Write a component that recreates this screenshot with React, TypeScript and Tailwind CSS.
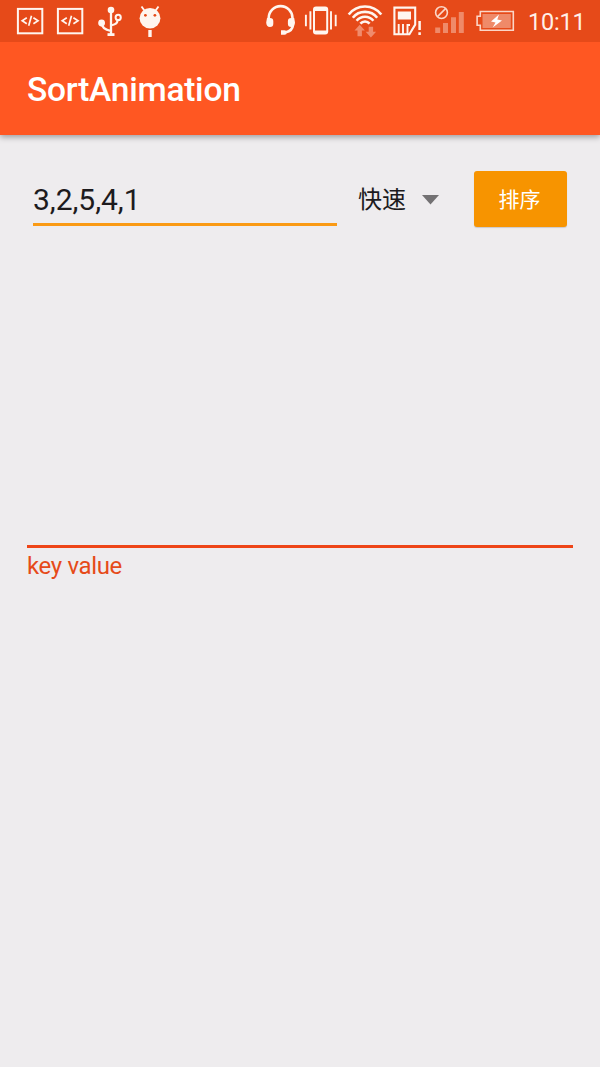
import { useState } from "react";
import type { ReactNode } from "react";

// Status icons share one 42px high coordinate strip; x is where each slice starts.
function StatusIcon({ x, className, children }: { x: number; className: string; children: ReactNode }) {
  const width = className.includes("w-[50px]") ? 50 : 40;
  return (
    <svg className={`h-[42px] shrink-0 ${className}`} viewBox={`${x} 0 ${width} 42`} fill="none" stroke="#fff5ef">
      {children}
    </svg>
  );
}

function CodeIcon({ x }: { x: number }) {
  return (
    <StatusIcon x={x} className="w-[40px]">
      <rect x={x + 7.9} y="8.9" width="24.4" height="24.4" strokeWidth="2" />
      <path d={`M${x + 16.8} 17.8l-4.600 3 4.600 3M${x + 23.4} 17.8l4.600 3-4.600 3M${x + 21.5} 15.8l-2.800 10`} strokeWidth="1.700" />
    </StatusIcon>
  );
}

function StatusBar() {
  return (
    <div className="flex h-[42px] shrink-0 items-start overflow-hidden bg-[#e64a19] pl-[10px]">
      <CodeIcon x={10} />
      <CodeIcon x={50} />
      <StatusIcon x={90} className="w-[40px]">
        <circle cx="111" cy="10" r="3.3" fill="#fff5ef" stroke="none" />
        <circle cx="101.6" cy="23" r="3.4" fill="#fff5ef" stroke="none" />
        <path d="M111 10v24M101.6 23c0 4 3 6.6 9.4 8M111 25.3c4-.5 6.3-2 6.6-4.8" strokeWidth="2.3" />
        <circle cx="118.2" cy="17.4" r="2.600" strokeWidth="2" />
        <path d="M107.500 34.600h7" strokeWidth="2.800" />
      </StatusIcon>
      <StatusIcon x={130} className="w-[40px]">
        <path d="M141.5 6.5l4 5.500M158.500 6.500l-4 5.500" strokeWidth="1.900" />
        <ellipse cx="150" cy="18.200" rx="10.400" ry="10.200" fill="#fff5ef" stroke="none" />
        <circle cx="145.400" cy="15.300" r="1.400" fill="#e64a19" stroke="none" />
        <circle cx="154.900" cy="15.300" r="1.400" fill="#e64a19" stroke="none" />
        <path d="M150 30v7" strokeWidth="3.400" />
      </StatusIcon>
      <div className="flex-1" />
      <StatusIcon x={260} className="w-[40px]">
        <path d="M268.700 22v-4a11.900 11.900 0 0 1 23.800 0v4M293 25c-.5 4-3 6.500-7 7.200" strokeWidth="2.600" />
        <path d="M267 18h3a3.300 3.300 0 0 1 3.300 3.300v2.400a3.300 3.300 0 0 1-3.300 3.300c-2.500 0-3.800-2-3.800-4.500zM294.200 18h-3a3.300 3.300 0 0 0-3.300 3.300v2.400a3.300 3.300 0 0 0 3.300 3.300c2.500 0 3.800-2 3.800-4.500z" fill="#fff5ef" stroke="none" />
        <path d="M281 30.200h3.500a2.300 2.300 0 0 1 0 4.600h-3.500z" fill="#fff5ef" stroke="none" />
      </StatusIcon>
      <StatusIcon x={300} className="w-[40px]">
        <rect x="313" y="6.400" width="15.200" height="28" rx="3" fill="#fff5ef" stroke="none" />
        <rect x="315" y="11" width="11.200" height="19.500" fill="#e64a19" stroke="none" />
        <path d="M310.400 11.300v18.200M331 11.300v18.200" strokeWidth="1.900" />
        <path d="M305.900 14.700v11.500M335.700 14.700v11.500" strokeWidth="1.900" />
      </StatusIcon>
      <StatusIcon x={340} className="w-[50px]">
        <path d="M348.700 14.500a20.500 20.500 0 0 1 32.600 0M352.800 17.800a15.500 15.500 0 0 1 24.400 0M356.600 20.800a10.700 10.700 0 0 1 16.800 0M360.400 23.700a6 6 0 0 1 9.200 0" strokeWidth="2.600" />
        <path d="M359.700 24.800l5.200 5.700h-3v5.700h-4.400v-5.700h-3zM370.900 37.500l5.200-5.700h-3v-5h-4.400v5h-3z" fill="#f08b6c" stroke="none" />
      </StatusIcon>
      <StatusIcon x={390} className="w-[40px]">
        <path d="M394.400 7.600h20.800v17l-5.800 9.600h-15z" strokeWidth="2.100" />
        <rect x="397.800" y="11.500" width="13.200" height="8" fill="#fff5ef" stroke="none" />
        <path d="M398.700 24v10M403 24v10M407.500 24v10M406.600 25h3.400" strokeWidth="1.900" />
        <path d="M419.600 21v9M419.600 32.300v2.700" strokeWidth="2.500" />
      </StatusIcon>
      <StatusIcon x={430} className="w-[40px]">
        <circle cx="441.500" cy="12.600" r="5.900" strokeWidth="1.600" stroke="#fbd6c7" />
        <path d="M437.500 16.600l8-8" strokeWidth="1.600" stroke="#fbd6c7" />
        <path d="M435.200 27.500h5v5.500h-5zM443 23h5v10h-5zM451 17.200h5v15.800h-5zM458.800 12h5v21h-5z" fill="#ef8a69" stroke="none" />
      </StatusIcon>
      <StatusIcon x={470} className="w-[50px]">
        <path d="M480.300 11.500h33v18.800h-33v-5h-3.200v-9h3.200z" strokeWidth="1.600" stroke="#fbd6c7" />
        <path d="M482.500 14h28.300v14h-28.300z" fill="#ef8a69" stroke="none" />
        <path d="M499 14.500l-8 7 4.500 1-2.800 5 9.300-7-4.700-1z" fill="#fff" stroke="none" />
      </StatusIcon>
      <span className="w-[80px] pl-[8px] text-[23.500px] leading-[44px] tracking-[-0.200px] text-[#fff0e8]">10:11</span>
    </div>
  );
}

export default function App() {
  const [values, setValues] = useState("3,2,5,4,1");

  return (
    <div className="flex h-[1067px] w-[600px] flex-col overflow-hidden bg-[#eeecee] font-['Roboto','Noto_Sans_CJK_SC',sans-serif]">
      <header className="relative flex shrink-0 flex-col shadow-[0_2px_6px_rgba(0,0,0,0.35)]">
        <StatusBar />
        <div className="flex h-[93px] items-center bg-[#ff5722] pl-[27px]">
          <h1 className="pt-[3px] text-[33.500px] leading-10 font-medium tracking-[-0.250px] text-white">SortAnimation</h1>
        </div>
      </header>

      <main className="flex flex-col px-[27px]">
        <div className="flex h-[92px] items-end pr-[6px] pl-[6px]">
          <input
            className="mb-[1px] h-[50px] w-[304px] border-b-[3px] border-[#fa9a14] bg-transparent text-[30px] tracking-[-0.050px] text-[#1d1b1d] outline-none"
            value={values}
            onChange={(event) => setValues(event.target.value)}
            spellCheck={false}
          />
          <button className="mb-[9px] ml-[21px] flex h-[36px] items-center text-[24px] leading-9 text-[#1d1b1d]">
            快速
            <svg className="ml-[16px] h-[10px] w-[17px]" viewBox="0 0 17 10" fill="#737173">
              <path d="M0 0h17l-8.500 9.500z" />
            </svg>
          </button>
          <button className="ml-auto h-[56px] w-[93px] rounded-[3px] bg-[#f79400] pt-[2px] pr-[2px] text-[21px] leading-[54px] text-white shadow-[0_1px_1px_rgba(0,0,0,0.15)]">
            排序
          </button>
        </div>

        <section className="mt-[318px] border-t-[3px] border-[#ee4518] pt-[2px]">
          <p className="text-[24px] leading-8 tracking-[-0.350px] text-[#e64a19]">key value</p>
        </section>
      </main>
    </div>
  );
}
